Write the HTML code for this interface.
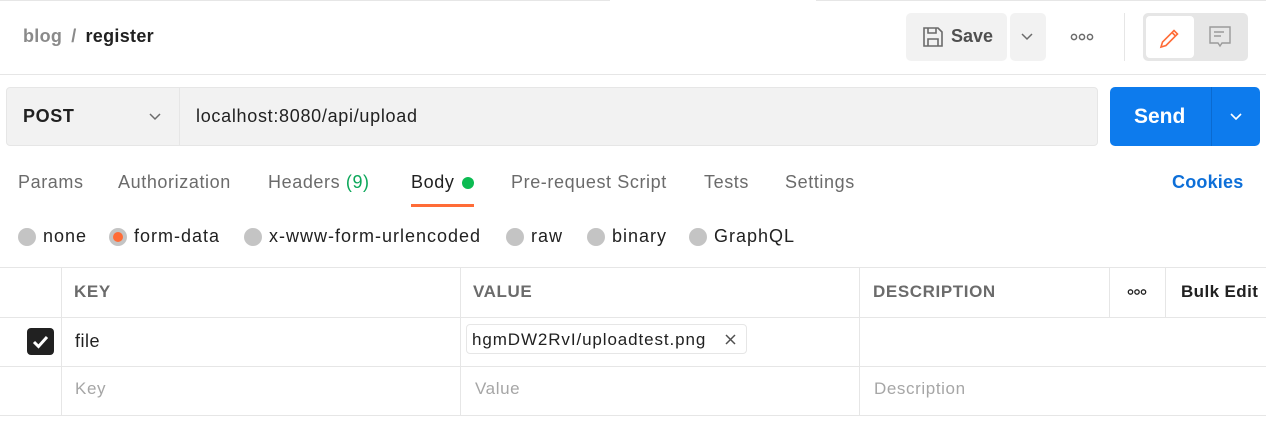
<!DOCTYPE html>
<html><head><style>
*{margin:0;padding:0;box-sizing:border-box}
body{width:1266px;height:442px;background:#fff;font-family:"Liberation Sans",sans-serif;position:relative;overflow:hidden;color:#212121}
.a{position:absolute;white-space:nowrap}
.hl{position:absolute;height:1px;background:#e6e6e6}
.vl{position:absolute;width:1px;background:#e6e6e6}
.tab{position:absolute;top:172px;font-size:18px;color:#6b6b6b;letter-spacing:0.6px}
.rad{position:absolute;top:228px;width:18px;height:18px;border-radius:50%;background:#c4c4c4}
.rl{position:absolute;top:226px;font-size:18px;color:#212121;letter-spacing:1px}
.th{position:absolute;top:282px;font-size:17px;font-weight:bold;color:#6b6b6b;letter-spacing:0.6px}
.ph{position:absolute;top:379px;font-size:17px;color:#a6a6a6;letter-spacing:0.6px}
</style></head><body>
<div class="hl" style="top:0;left:0;width:610px"></div>
<div class="hl" style="top:0;left:816px;width:450px"></div>
<div class="a" style="left:23px;top:26px;font-size:18px;font-weight:bold;letter-spacing:0.3px"><span style="color:#8a8a8a">blog</span><span style="color:#8a8a8a;margin:0 9px">/</span><span style="color:#212121">register</span></div>
<div class="a" style="left:906px;top:13px;width:101px;height:48px;background:#f2f2f2;border-radius:5px"></div>
<svg class="a" style="left:922px;top:26px" width="22" height="22" viewBox="0 0 22 22" fill="none" stroke="#6b6b6b" stroke-width="1.6"><path d="M2 2h14l4 4v14H2z"/><path d="M6 2v5h8V2M6 20v-7h10v7"/></svg>
<div class="a" style="left:951px;top:26px;font-size:18px;color:#505050;font-weight:bold">Save</div>
<div class="a" style="left:1010px;top:13px;width:36px;height:48px;background:#f2f2f2;border-radius:5px"></div>
<svg class="a" style="left:1020px;top:32px" width="14" height="10" viewBox="0 0 14 10"><path d="M2 2l5 5 5-5" stroke="#6b6b6b" stroke-width="1.5" fill="none"/></svg>
<svg class="a" style="left:1070px;top:32px" width="24" height="10" viewBox="0 0 24 10" fill="none" stroke="#6b6b6b" stroke-width="1.5"><circle cx="4" cy="5" r="2.6"/><circle cx="12" cy="5" r="2.6"/><circle cx="20" cy="5" r="2.6"/></svg>
<div class="vl" style="left:1124px;top:13px;height:48px"></div>
<div class="a" style="left:1143px;top:13px;width:105px;height:48px;background:#e6e6e6;border-radius:5px"></div>
<div class="a" style="left:1146px;top:16px;width:48px;height:42px;background:#fff;border-radius:4px"></div>
<svg class="a" style="left:1158px;top:26px" width="24" height="24" viewBox="0 0 24 24" fill="none" stroke="#ff6c37" stroke-width="1.6"><path d="M3 21l1.5-5L16 4.5l3.5 3.5L8 19.5z M14 6.5l3.5 3.5"/></svg>
<svg class="a" style="left:1208px;top:25px" width="24" height="24" viewBox="0 0 24 24" fill="none" stroke="#9a9a9a" stroke-width="1.4"><path d="M2 2h20v16h-8l-2 3-2-3H2z M6 7h10 M6 11h7"/></svg>
<div class="hl" style="top:74px;left:0;width:1266px"></div>
<div class="a" style="left:6px;top:87px;width:1092px;height:59px;background:#f2f2f2;border:1px solid #e6e6e6;border-radius:4px"></div>
<div class="vl" style="left:179px;top:88px;height:57px"></div>
<div class="a" style="left:23px;top:106px;font-size:18px;font-weight:bold;color:#212121;letter-spacing:0.6px">POST</div>
<svg class="a" style="left:148px;top:112px" width="14" height="10" viewBox="0 0 14 10"><path d="M2 2l5 5 5-5" stroke="#6b6b6b" stroke-width="1.5" fill="none"/></svg>
<div class="a" style="left:196px;top:106px;font-size:18px;color:#212121;letter-spacing:0.7px">localhost:8080/api/upload</div>
<div class="a" style="left:1110px;top:87px;width:150px;height:59px;background:#0d7bed;border-radius:5px"></div>
<div class="vl" style="left:1211px;top:87px;height:59px;background:#0a6ad0"></div>
<div class="a" style="left:1134px;top:105px;font-size:21px;font-weight:bold;color:#fff">Send</div>
<svg class="a" style="left:1229px;top:112px" width="14" height="10" viewBox="0 0 14 10"><path d="M2 2l5 5 5-5" stroke="#fff" stroke-width="1.6" fill="none"/></svg>
<div class="tab" style="left:18px">Params</div>
<div class="tab" style="left:118px">Authorization</div>
<div class="tab" style="left:268px">Headers <span style="color:#0ca75a">(9)</span></div>
<div class="tab" style="left:411px;color:#212121">Body</div>
<div class="a" style="left:462px;top:177px;width:12px;height:12px;border-radius:50%;background:#0cbb52"></div>
<div class="a" style="left:411px;top:204px;width:63px;height:3px;background:#ff6c37"></div>
<div class="tab" style="left:511px">Pre-request Script</div>
<div class="tab" style="left:704px">Tests</div>
<div class="tab" style="left:785px">Settings</div>
<div class="tab" style="left:1172px;color:#0d6fd8;font-weight:bold;letter-spacing:0.2px">Cookies</div>
<div class="rad" style="left:18px"></div><div class="rl" style="left:43px">none</div>
<div class="rad" style="left:109px"></div><div class="a" style="left:113px;top:232px;width:10px;height:10px;border-radius:50%;background:#ff6c37"></div><div class="rl" style="left:134px">form-data</div>
<div class="rad" style="left:244px"></div><div class="rl" style="left:269px">x-www-form-urlencoded</div>
<div class="rad" style="left:506px"></div><div class="rl" style="left:531px">raw</div>
<div class="rad" style="left:587px"></div><div class="rl" style="left:612px">binary</div>
<div class="rad" style="left:689px"></div><div class="rl" style="left:714px">GraphQL</div>
<div class="hl" style="top:267px;left:0;width:1266px"></div>
<div class="hl" style="top:317px;left:0;width:1266px"></div>
<div class="hl" style="top:366px;left:0;width:1266px"></div>
<div class="hl" style="top:415px;left:0;width:1266px"></div>
<div class="vl" style="left:61px;top:267px;height:148px"></div>
<div class="vl" style="left:460px;top:267px;height:148px"></div>
<div class="vl" style="left:859px;top:267px;height:148px"></div>
<div class="vl" style="left:1109px;top:267px;height:50px"></div>
<div class="vl" style="left:1165px;top:267px;height:50px"></div>
<div class="th" style="left:74px">KEY</div>
<div class="th" style="left:473px">VALUE</div>
<div class="th" style="left:873px">DESCRIPTION</div>
<svg class="a" style="left:1127px;top:288px" width="20" height="8" viewBox="0 0 20 8" fill="none" stroke="#212121" stroke-width="1.3"><circle cx="3.5" cy="4" r="2.2"/><circle cx="10" cy="4" r="2.2"/><circle cx="16.5" cy="4" r="2.2"/></svg>
<div class="th" style="left:1181px;color:#212121;letter-spacing:0.4px">Bulk Edit</div>
<div class="a" style="left:27px;top:328px;width:27px;height:27px;background:#212121;border-radius:4px"></div>
<svg class="a" style="left:27px;top:328px" width="27" height="27" viewBox="0 0 27 27"><path d="M7 14l4.5 4.5L20 9" stroke="#fff" stroke-width="3" fill="none"/></svg>
<div class="a" style="left:75px;top:331px;font-size:18px;color:#212121;letter-spacing:0.5px">file</div>
<div class="a" style="left:466px;top:324px;width:281px;height:30px;border:1px solid #e6e6e6;border-radius:4px"></div>
<div class="a" style="left:472px;top:330px;font-size:17px;color:#212121;letter-spacing:0.9px">hgmDW2RvI/uploadtest.png</div>
<svg class="a" style="left:724px;top:333px" width="13" height="13" viewBox="0 0 13 13"><path d="M2 2l9 9M11 2l-9 9" stroke="#505050" stroke-width="1.5"/></svg>
<div class="ph" style="left:75px">Key</div>
<div class="ph" style="left:475px">Value</div>
<div class="ph" style="left:874px">Description</div>
</body></html>
